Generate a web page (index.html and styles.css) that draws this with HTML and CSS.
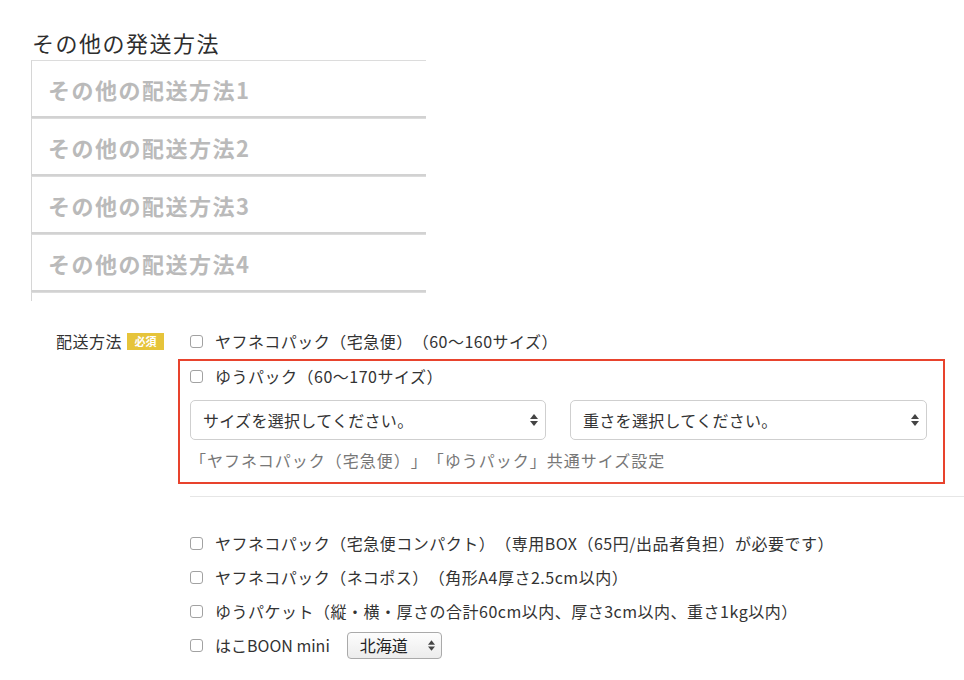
FILE: index.html
```html
<!DOCTYPE html>
<html lang="ja">
<head>
<meta charset="utf-8">
<title>配送方法</title>
<link rel="stylesheet" href="styles.css">
</head>
<body>
<div class="page">
  <h2 class="title">その他の発送方法</h2>
  <div class="others">
    <div class="other"><span class="ph">その他の配送方法1</span></div>
    <div class="other"><span class="ph">その他の配送方法2</span></div>
    <div class="other"><span class="ph">その他の配送方法3</span></div>
    <div class="other"><span class="ph">その他の配送方法4</span></div>
    <div class="other"></div>
  </div>

  <div class="form">
    <div class="label-col">
      <span class="label">配送方法</span><span class="badge"><span class="badge-t">必須</span></span>
    </div>
    <div class="content">
      <div class="opt"><span class="cb"></span><span>ヤフネコパック（宅急便）（60〜160サイズ）</span></div>
      <div class="highlight">
        <div class="opt"><span class="cb"></span><span>ゆうパック（60〜170サイズ）</span></div>
        <div class="selects">
          <div class="sel sel-size"><span>サイズを選択してください。</span>
            <svg class="arr" viewBox="0 0 8 12" width="8" height="12"><polygon points="4,0 8,5 0,5"/><polygon points="0,7 8,7 4,12"/></svg>
          </div>
          <div class="sel sel-weight"><span>重さを選択してください。</span>
            <svg class="arr" viewBox="0 0 8 12" width="8" height="12"><polygon points="4,0 8,5 0,5"/><polygon points="0,7 8,7 4,12"/></svg>
          </div>
        </div>
        <div class="help">「ヤフネコパック（宅急便）」「ゆうパック」共通サイズ設定</div>
      </div>
      <div class="rule"></div>
      <div class="more">
        <div class="opt"><span class="cb"></span><span>ヤフネコパック（宅急便コンパクト）（専用BOX（65円/出品者負担）が必要です）</span></div>
        <div class="opt"><span class="cb"></span><span>ヤフネコパック（ネコポス）（角形A4厚さ2.5cm以内）</span></div>
        <div class="opt"><span class="cb"></span><span>ゆうパケット（縦・横・厚さの合計60cm以内、厚さ3cm以内、重さ1kg以内）</span></div>
        <div class="opt"><span class="cb"></span><span class="tight">はこBOON mini</span>
          <div class="mini-sel"><span>北海道</span>
            <svg class="arr" viewBox="0 0 8 12" width="7" height="11"><polygon points="4,0 8,5 0,5"/><polygon points="0,7 8,7 4,12"/></svg>
          </div>
        </div>
      </div>
    </div>
  </div>
</div>
</body>
</html>
```

FILE: styles.css
```css
html, body {
  margin: 0;
  padding: 0;
  background: #fff;
}
body {
  font-family: "Noto Sans CJK JP", "Noto Sans", sans-serif;
  color: #333;
  width: 964px;
  height: 680px;
  overflow: hidden;
  text-spacing-trim: space-all;
}
.page {
  padding: 27px 0 0 31px;
}
.title {
  margin: 0 0 3px 1px;
  font-size: 22px;
  font-weight: normal;
  line-height: 30px;
  letter-spacing: 1.5px;
  color: #2e2e2e;
}
.others {
  width: 395px;
  height: 241px;
  overflow: hidden;
}
.other {
  box-sizing: border-box;
  height: 58px;
  border-top: 1px solid #dcdcdc;
  border-left: 1px solid #d6d6d6;
  border-bottom: 2px solid #d2d2d2;
  display: flex;
  align-items: center;
  padding-left: 16px;
}
.ph {
  font-size: 22px;
  font-weight: bold;
  line-height: 30px;
  color: #bababa;
  letter-spacing: 1.5px;
}
.form {
  display: flex;
  margin: 25px 0 0 25px;
}
.label-col {
  width: 134px;
  height: 30px;
  display: flex;
  align-items: center;
  gap: 5px;
}
.label {
  font-size: 16px;
  line-height: 20px;
  letter-spacing: 0.5px;
}
.badge {
  width: 37px;
  height: 17px;
  background: #e6c43a;
  display: flex;
  align-items: center;
  justify-content: center;
}
.badge-t {
  color: #fff;
  font-size: 11px;
  line-height: 13px;
  font-weight: bold;
}
.content {
  width: 774px;
}
.opt {
  display: flex;
  align-items: center;
  height: 30px;
  line-height: 22px;
  font-size: 16px;
  letter-spacing: 0.5px;
  white-space: nowrap;
}
.tight {
  letter-spacing: 0;
}
.cb {
  box-sizing: border-box;
  width: 13px;
  height: 13px;
  border: 1px solid #a2a2a2;
  border-radius: 3px;
  margin-right: 12px;
  flex-shrink: 0;
  background: #fff;
}
.highlight {
  box-sizing: border-box;
  margin: 3px 0 0 -12px;
  width: 767px;
  border: 2px solid #e8432d;
  padding: 0 0 10px 10px;
}
.selects {
  display: flex;
  gap: 24px;
  margin-top: 9px;
}
.sel {
  box-sizing: border-box;
  height: 40px;
  border: 1px solid #cfcfcf;
  border-radius: 5px;
  background: #fff;
  display: flex;
  align-items: center;
  justify-content: space-between;
  padding: 0 7px 0 12px;
  font-size: 16px;
  line-height: 22px;
  letter-spacing: 0.3px;
  color: #333;
}
.sel-size { width: 356px; }
.sel-weight { width: 357px; }
.arr {
  fill: #444;
  flex-shrink: 0;
}
.help {
  margin-top: 8px;
  line-height: 24px;
  font-size: 16px;
  letter-spacing: 1px;
  color: #777;
  white-space: nowrap;
}
.rule {
  margin-top: 12px;
  border-top: 1px solid #e6e6e6;
}
.more {
  margin-top: 31px;
  display: flex;
  flex-direction: column;
  gap: 4px;
}
.mini-sel {
  box-sizing: border-box;
  margin-left: 17px;
  width: 95px;
  height: 27px;
  border: 1px solid #aaa;
  border-radius: 4px;
  background: linear-gradient(#fdfdfd, #ececec);
  display: flex;
  align-items: center;
  justify-content: space-between;
  padding: 0 6px 0 12px;
  font-size: 16px;
  line-height: 22px;
  letter-spacing: 0;
  color: #222;
}
```
